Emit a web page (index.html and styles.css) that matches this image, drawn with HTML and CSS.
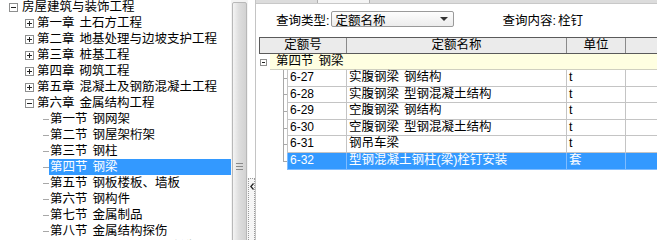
FILE: index.html
```html
<!DOCTYPE html>
<html lang="zh-CN">
<head>
    <meta charset="UTF-8">
    <title>定额查询</title>
    <link rel="stylesheet" href="styles.css">
</head>
<body>
<div class="app">
    <!-- 左侧定额章节树 -->
    <div class="tree-pane">
        <ul class="tree">
            <li class="root"><span class="exp"></span>房屋建筑与装饰工程</li>
            <li class="chapter"><span class="exp plus"></span>第一章 土石方工程</li>
            <li class="chapter"><span class="exp plus"></span>第二章 地基处理与边坡支护工程</li>
            <li class="chapter"><span class="exp plus"></span>第三章 桩基工程</li>
            <li class="chapter"><span class="exp plus"></span>第四章 砌筑工程</li>
            <li class="chapter"><span class="exp plus"></span>第五章 混凝土及钢筋混凝土工程</li>
            <li class="chapter"><span class="exp"></span>第六章 金属结构工程</li>
            <li class="section"><span class="stub"></span><span class="label">第一节 钢网架</span></li>
            <li class="section"><span class="stub"></span><span class="label">第二节 钢屋架桁架</span></li>
            <li class="section"><span class="stub"></span><span class="label">第三节 钢柱</span></li>
            <li class="section selected"><span class="stub"></span><span class="label">第四节 钢梁</span></li>
            <li class="section"><span class="stub"></span><span class="label">第五节 钢板楼板、墙板</span></li>
            <li class="section"><span class="stub"></span><span class="label">第六节 钢构件</span></li>
            <li class="section"><span class="stub"></span><span class="label">第七节 金属制品</span></li>
            <li class="section"><span class="stub"></span><span class="label">第八节 金属结构探伤</span></li>
            <li class="section"><span class="stub"></span><span class="label">第九节 金属结构现场除锈及其他</span></li>
        </ul>
    </div>
    <div class="vscroll">
        <div class="thumb"><span class="grip"></span></div>
    </div>
    <div class="splitter">
        <div class="collapse">
            <svg width="4" height="7" viewBox="0 0 4 7"><polyline points="3.5,0.5 0.8,3.5 3.5,6.5" fill="none" stroke="#222" stroke-width="1.3"/></svg>
        </div>
    </div>

    <!-- 右侧查询与结果 -->
    <div class="main">
        <div class="topstrip"><span class="tab"></span></div>
        <div class="query">
            <span>查询类型:</span>
            <div class="select">
                <span class="value">定额名称</span>
                <span class="arrow"></span>
            </div>
            <span class="q-label">查询内容:</span>
            <span class="q-value">栓钉</span>
        </div>

        <div class="grid">
            <div class="grid-head">
                <div class="c-code">定额号</div>
                <div class="c-name">定额名称</div>
                <div class="c-unit">单位</div>
                <div class="c-rest"></div>
            </div>
            <div class="group">
                <span class="exp small"></span>
                <span class="group-label">第四节 钢梁</span>
            </div>
            <div class="row">
                <div class="twig"></div>
                <div class="c-code">6-27</div>
                <div class="c-name">实腹钢梁 钢结构</div>
                <div class="c-unit">t</div>
                <div class="c-rest"></div>
            </div>
            <div class="row">
                <div class="twig"></div>
                <div class="c-code">6-28</div>
                <div class="c-name">实腹钢梁 型钢混凝土结构</div>
                <div class="c-unit">t</div>
                <div class="c-rest"></div>
            </div>
            <div class="row">
                <div class="twig"></div>
                <div class="c-code">6-29</div>
                <div class="c-name">空腹钢梁 钢结构</div>
                <div class="c-unit">t</div>
                <div class="c-rest"></div>
            </div>
            <div class="row">
                <div class="twig"></div>
                <div class="c-code">6-30</div>
                <div class="c-name">空腹钢梁 型钢混凝土结构</div>
                <div class="c-unit">t</div>
                <div class="c-rest"></div>
            </div>
            <div class="row">
                <div class="twig"></div>
                <div class="c-code">6-31</div>
                <div class="c-name">钢吊车梁</div>
                <div class="c-unit">t</div>
                <div class="c-rest"></div>
            </div>
            <div class="row selected last">
                <div class="twig"></div>
                <div class="c-code">6-32</div>
                <div class="c-name">型钢混凝土钢柱(梁)栓钉安装</div>
                <div class="c-unit">套</div>
                <div class="c-rest"></div>
            </div>
        </div>
    </div>
</div>
</body>
</html>
```

FILE: styles.css
```css
body {
    margin: 0;
    font-family: "Liberation Sans", "Noto Sans CJK SC", sans-serif;
    font-size: 12.5px;
    word-spacing: 1.5px;
    color: #000;
    background: #fff;
}

.app {
    display: flex;
    width: 657px;
    height: 240px;
    overflow: hidden;
}

/* 左侧树 */
.tree-pane {
    width: 231px;
    flex: none;
    overflow: hidden;
    background: #fff;
}

.tree {
    list-style: none;
    margin: -1px 0 0;
    padding: 0;
}

.tree li {
    display: flex;
    align-items: center;
    height: 16px;
    line-height: 16px;
    white-space: nowrap;
    overflow: hidden;
}

.tree .root {
    padding-left: 9px;
}

.tree .root .exp {
    margin-right: 4px;
}

.tree .chapter {
    padding-left: 25px;
}

.tree .section {
    padding-left: 43px;
}

.exp {
    flex: none;
    width: 9px;
    height: 9px;
    box-sizing: border-box;
    border: 1px solid #8e8f8f;
    margin-right: 3px;
    background: linear-gradient(#222, #222) center / 5px 1px no-repeat, #fff;
}

.exp.plus {
    background: linear-gradient(#222, #222) center / 5px 1px no-repeat,
                linear-gradient(#222, #222) center / 1px 5px no-repeat, #fff;
}

.stub {
    flex: none;
    width: 6px;
    height: 1px;
    background: #a8a8a8;
}

.section .label {
    flex: 1;
    height: 16px;
    padding-left: 1px;
}

.section.selected .label {
    background: #3399ff;
    color: #fff;
}

/* 滚动条 */
.vscroll {
    width: 17px;
    flex: none;
    background: #f4f4f4;
}

.thumb {
    display: flex;
    align-items: center;
    justify-content: center;
    margin: 2px 1px 0;
    height: 328px;
    box-sizing: border-box;
    border: 1px solid #b8b8b8;
    border-radius: 2px;
    background: linear-gradient(to right, #f4f4f4, #dedede 45%, #d2d2d2);
}

.grip {
    width: 7px;
    height: 7px;
    background: repeating-linear-gradient(#8a8a8a 0 1px, transparent 1px 3px);
}

.splitter {
    width: 8px;
    flex: none;
    box-sizing: border-box;
    border-right: 1px solid #c4c4c4;
    background: #fff;
}

.collapse {
    margin-top: 178px;
    width: 7px;
    height: 70px;
    box-sizing: border-box;
    border: 1px dotted #9a9a9a;
    background: #f6f6f6;
    display: flex;
    justify-content: center;
    padding-top: 4px;
}

/* 右侧 */
.main {
    flex: 1;
    min-width: 0;
    overflow: hidden;
}

.topstrip {
    height: 3px;
    border-bottom: 1px solid #c8c8c8;
    background: #dcdcdc;
}

.tab {
    display: block;
    width: 53px;
    height: 3px;
    margin-left: 61px;
    box-sizing: border-box;
    border-left: 1px solid #b0b0b0;
    border-right: 1px solid #b0b0b0;
    background: #f4f4f4;
}

.query {
    display: flex;
    align-items: center;
    height: 16px;
    margin-top: 7px;
    padding-left: 20px;
    white-space: nowrap;
}

.select {
    display: flex;
    align-items: center;
    width: 123px;
    height: 16px;
    margin-left: 2px;
    padding-left: 3px;
    box-sizing: border-box;
    border: 1px solid #9a9a9a;
    border-radius: 2px;
    background: linear-gradient(#fdfdfd, #ececec);
}

.select .value {
    flex: 1;
}

.select .arrow {
    width: 0;
    height: 0;
    margin-right: 5px;
    border-left: 4px solid transparent;
    border-right: 4px solid transparent;
    border-top: 4px solid #333;
}

.q-label {
    margin-left: 48px;
}

.q-value {
    margin-left: 2px;
}

/* 结果表格 */
.grid {
    margin: 10px 0 0 3px;
    width: 420px;
}

.grid-head {
    display: flex;
    height: 17px;
    box-sizing: border-box;
    border: 1px solid #5a5a5a;
    border-right: none;
    background: #ebebeb;
    line-height: 15px;
}

.grid-head > div {
    box-sizing: border-box;
    border-right: 1px solid #8a8a8a;
    text-align: center;
}

.grid-head .c-code {
    width: 87px;
}

.grid-head .c-name {
    width: 220px;
}

.grid-head .c-unit {
    width: 59px;
}

.grid-head .c-rest {
    flex: 1;
}

.group {
    display: flex;
    align-items: center;
    height: 16px;
}

.exp.small {
    width: 7px;
    height: 7px;
    margin: 0 0 0 1px;
    background: linear-gradient(#222, #222) center / 3px 1px no-repeat, #fff;
}

.group-label {
    flex: 1;
    height: 16px;
    line-height: 15px;
    margin-left: 3px;
    padding-left: 6px;
    box-sizing: border-box;
    border-bottom: 1px solid #d0d0c0;
    background: #ffffe1;
}

.row {
    display: flex;
    height: 16.6px;
    line-height: 15.6px;
    white-space: nowrap;
}

.row > div {
    box-sizing: border-box;
}

.twig {
    width: 28px;
    flex: none;
    background: linear-gradient(#a8a8a8, #a8a8a8) 24px 0 / 1px 100% no-repeat,
                linear-gradient(#a8a8a8, #a8a8a8) 24px 50% / 4px 1px no-repeat;
}

.row.last .twig {
    background: linear-gradient(#a8a8a8, #a8a8a8) 24px 0 / 1px 50% no-repeat,
                linear-gradient(#a8a8a8, #a8a8a8) 24px 50% / 4px 1px no-repeat;
}

.row .c-code,
.row .c-name,
.row .c-unit,
.row .c-rest {
    border-left: 1px solid #c4c4c4;
    border-bottom: 1px solid #c4c4c4;
    padding-left: 2px;
}

.row .c-code {
    width: 59px;
    font-size: 12px;
}

.row .c-name {
    width: 220px;
}

.row .c-unit {
    width: 59px;
}

.row .c-rest {
    flex: 1;
}

.row.selected .c-code,
.row.selected .c-name,
.row.selected .c-unit,
.row.selected .c-rest {
    background: #3399ff;
    color: #fff;
    border-color: #7fbcff;
}
```
